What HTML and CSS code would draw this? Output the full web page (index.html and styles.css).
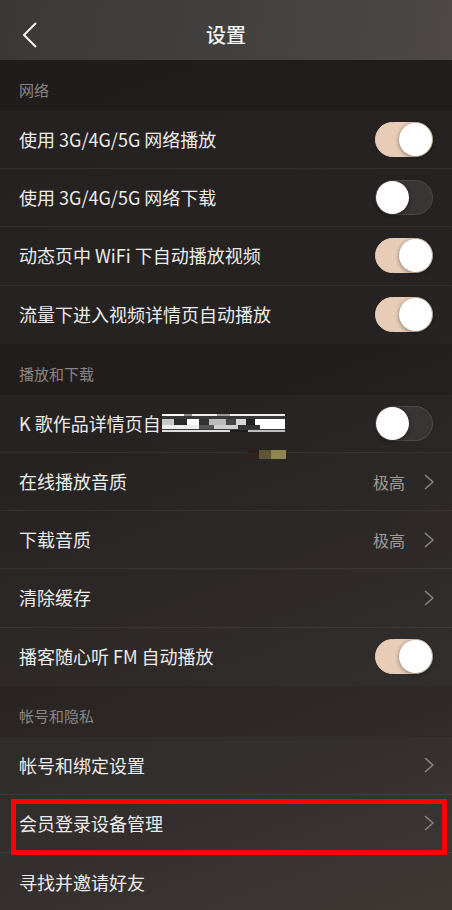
FILE: index.html
```html
<!DOCTYPE html>
<html lang="zh">
<head>
<meta charset="utf-8">
<link rel="stylesheet" href="styles.css">
</head>
<body>
<div class="screen">
  <header class="nav">
    <svg class="back" width="18" height="28" viewBox="0 0 18 28"><path d="M15 2 L3 14 L15 26" fill="none" stroke="#f2f2f2" stroke-width="2"/></svg>
    <h1 class="title">设置</h1>
  </header>

  <div class="section">网络</div>
  <div class="row line"><span class="label">使用 3G/4G/5G 网络播放</span><span class="toggle on"><span class="knob"></span></span></div>
  <div class="row line"><span class="label">使用 3G/4G/5G 网络下载</span><span class="toggle"><span class="knob"></span></span></div>
  <div class="row line"><span class="label">动态页中 WiFi 下自动播放视频</span><span class="toggle on"><span class="knob"></span></span></div>
  <div class="row"><span class="label">流量下进入视频详情页自动播放</span><span class="toggle on"><span class="knob"></span></span></div>

  <div class="section">播放和下载</div>
  <div class="row line ksong"><span class="label">K 歌作品详情页自<span class="mosaic"></span></span><span class="toggle"><span class="knob"></span></span><span class="speck"></span></div>
  <div class="row line"><span class="label">在线播放音质</span><span class="value">极高</span><svg class="chev" width="10" height="16" viewBox="0 0 10 16"><path d="M1 1 L9 8 L1 15" fill="none" stroke="#8c8886" stroke-width="1.5"/></svg></div>
  <div class="row line"><span class="label">下载音质</span><span class="value">极高</span><svg class="chev" width="10" height="16" viewBox="0 0 10 16"><path d="M1 1 L9 8 L1 15" fill="none" stroke="#8c8886" stroke-width="1.5"/></svg></div>
  <div class="row line"><span class="label">清除缓存</span><svg class="chev" width="10" height="16" viewBox="0 0 10 16"><path d="M1 1 L9 8 L1 15" fill="none" stroke="#8c8886" stroke-width="1.5"/></svg></div>
  <div class="row"><span class="label">播客随心听 FM 自动播放</span><span class="toggle on"><span class="knob"></span></span></div>

  <div class="section">帐号和隐私</div>
  <div class="row line"><span class="label">帐号和绑定设置</span><svg class="chev" width="10" height="16" viewBox="0 0 10 16"><path d="M1 1 L9 8 L1 15" fill="none" stroke="#8c8886" stroke-width="1.5"/></svg></div>
  <div class="row line marked"><span class="label">会员登录设备管理</span><svg class="chev" width="10" height="16" viewBox="0 0 10 16"><path d="M1 1 L9 8 L1 15" fill="none" stroke="#8c8886" stroke-width="1.5"/></svg><span class="redbox"></span></div>
  <div class="row"><span class="label">寻找并邀请好友</span></div>
</div>
</body>
</html>
```

FILE: styles.css
```css
html, body {
  margin: 0;
  padding: 0;
  background: #221e1d;
}
.screen {
  width: 452px;
  height: 910px;
  overflow: hidden;
  font-family: "Noto Sans CJK SC", "Noto Sans", sans-serif;
  background: linear-gradient(160deg, #1f1c1b 0%, #221e1d 45%, #2f2a28 80%, #3a3431 100%);
  color: #ececec;
}
.nav {
  height: 60px;
  position: relative;
  display: flex;
  align-items: center;
  justify-content: center;
  background: linear-gradient(100deg, #3a3938 0%, #434140 55%, #4d4846 100%);
}
.back {
  position: absolute;
  left: 21px;
  top: 21px;
}
.title {
  margin: 0;
  font-size: 20px;
  font-weight: 500;
  color: #f5f5f5;
  padding-top: 8px;
}
.section {
  height: 51px;
  box-sizing: border-box;
  padding: 20px 0 0 19px;
  font-size: 15px;
  line-height: 20px;
  color: #8a8583;
}
.row {
  height: 58.2px;
  box-sizing: border-box;
  display: flex;
  align-items: center;
  padding: 0 18px 0 19px;
  position: relative;
  background: rgba(255, 255, 255, 0.025);
}
.row.line {
  border-bottom: 1px solid rgba(255, 255, 255, 0.06);
}
.label {
  flex: 1;
  font-size: 18px;
  color: #ececec;
  display: flex;
  align-items: center;
  white-space: nowrap;
  padding-bottom: 1px;
}
.value {
  font-size: 16px;
  color: #a09c99;
  margin-right: 19px;
}
.chev {
  display: block;
}
.toggle {
  width: 58px;
  height: 35px;
  border-radius: 18px;
  box-sizing: border-box;
  background: #383534;
  border: 1px solid #4c4947;
  position: relative;
  margin-right: 1px;
}
.toggle.on {
  background: #e7cdb8;
  border-color: #e7cdb8;
}
.knob {
  position: absolute;
  top: 0px;
  left: 0px;
  width: 33px;
  height: 33px;
  border-radius: 50%;
  background: #fff;
  box-shadow: 0 1px 4px rgba(0, 0, 0, 0.45);
}
.toggle.on .knob {
  left: 23px;
}
.mosaic {
  display: inline-block;
  width: 123px;
  height: 18px;
  margin-left: 1px;
  background:
    linear-gradient(90deg, #fafafa 0 18%, #8a8a8a 18% 24%, #eeeeee 24% 45%, #9a9a9a 45% 55%, #f0f0f0 55% 100%) 0 0 / 100% 2px no-repeat,
    linear-gradient(90deg, #c8c8c8 0 10%, #2a2a2a 10% 20%, #ffffff 20% 30%, #333 30% 38%, #bbbbbb 38% 52%, #444 52% 60%, #d8d8d8 60% 68%, #222 68% 76%, #ffffff 76% 100%) 0 5px / 100% 6px no-repeat,
    linear-gradient(90deg, #ededed 0 30%, #555 30% 42%, #cfcfcf 42% 62%, #333 62% 80%, #ffffff 80% 100%) 0 11px / 100% 4px no-repeat,
    linear-gradient(90deg, #dddddd 0 55%, #1f1c1b 55% 70%, #bfbfbf 70% 100%) 0 16px / 100% 2px no-repeat,
    #3a3836;
}
.speck {
  position: absolute;
  left: 248px;
  top: 55px;
  width: 38px;
  height: 9px;
  background: linear-gradient(90deg, #2a1e18 0 30%, #5a5334 30% 60%, #8d834d 60% 100%);
}
.redbox {
  position: absolute;
  left: 11px;
  right: 5px;
  top: 4px;
  height: 56px;
  box-sizing: border-box;
  border: 5px solid #ff0000;
  pointer-events: none;
}
```
